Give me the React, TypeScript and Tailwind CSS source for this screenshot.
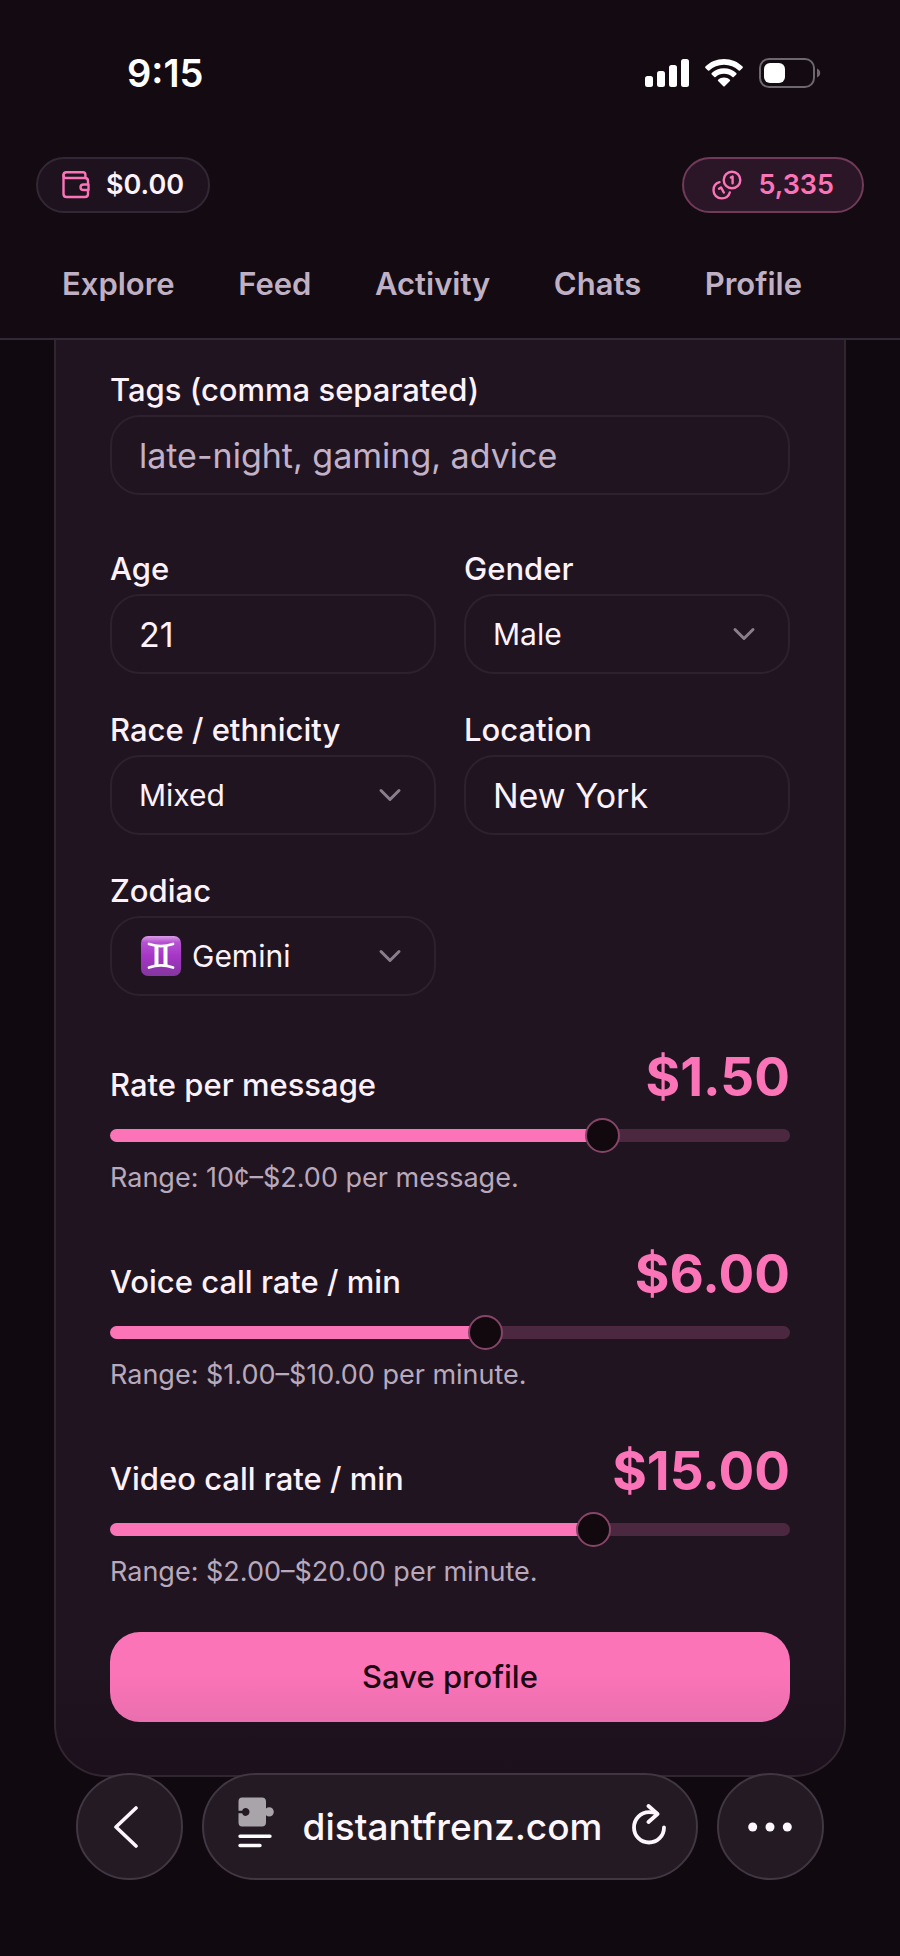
import { useState, type CSSProperties, type ReactNode } from "react";
import { ChevronDown } from "lucide-react";

const LINKS = ["Explore", "Feed", "Activity", "Chats", "Profile"];

const FIELD =
  "h-20 w-full rounded-[30px] border-2 border-[#2d212e] bg-[#211421] px-[27px] text-[#fdf2fb] outline-none";

function StatusBar() {
  return (
    <div className="flex h-[135px] items-center justify-between pt-[11px] pr-[79px] pl-[127px]">
      <span className="text-[38px] leading-10 font-semibold text-white">9:15</span>
      <div className="flex items-center gap-4">
        <svg width="44" height="28" viewBox="0 0 44 28" fill="#fff" aria-hidden="true">
          <rect x="0" y="17" width="8" height="11" rx="2.5" />
          <rect x="12" y="12" width="8" height="16" rx="2.5" />
          <rect x="24" y="6" width="8" height="22" rx="2.5" />
          <rect x="36" y="0" width="8" height="28" rx="2.5" />
        </svg>
        <svg width="38" height="28" viewBox="0 0 38 28" fill="#fff" aria-hidden="true">
          <path d="M19 0C26.400 0 33 2.800 37.600 7.600C38 8 38 8.500 37.600 8.900L35 11.500C34.600 11.900 34.100 11.900 33.700 11.500C29.800 7.800 24.700 5.700 19 5.700C13.300 5.700 8.200 7.800 4.300 11.500C3.900 11.900 3.400 11.900 3 11.500L0.400 8.900C0 8.500 0 8 0.400 7.600C5 2.800 11.600 0 19 0Z" />
          <path d="M19 9.300C23.800 9.300 28.100 11.100 31.300 14.100C31.700 14.500 31.700 15 31.300 15.400L28.700 18C28.300 18.400 27.800 18.400 27.400 18C25.100 16 22.200 14.800 19 14.800C15.800 14.800 12.900 16 10.600 18C10.200 18.400 9.700 18.400 9.300 18L6.700 15.400C6.300 15 6.300 14.500 6.700 14.100C9.900 11.100 14.200 9.300 19 9.300Z" />
          <path d="M19 18.600C21.200 18.600 23.300 19.400 24.900 20.800C25.300 21.200 25.300 21.700 24.900 22.100L19.700 27.300C19.300 27.700 18.700 27.700 18.300 27.300L13.100 22.100C12.700 21.700 12.700 21.200 13.100 20.800C14.700 19.400 16.800 18.600 19 18.600Z" />
        </svg>
        <svg width="62" height="30" viewBox="0 0 62 30" aria-hidden="true">
          <rect x="1" y="1" width="54" height="28" rx="9" fill="none" stroke="#6d686e" strokeWidth="2" />
          <rect x="5" y="5" width="21" height="20" rx="6" fill="#fff" />
          <path d="M58 10.500C60 11.300 61.200 13 61.200 15C61.200 17 60 18.700 58 19.500Z" fill="#6d686e" />
        </svg>
      </div>
    </div>
  );
}

function WalletIcon() {
  return (
    <svg width="28" height="28" viewBox="0 0 28 28" fill="none" stroke="#fb74b8" strokeWidth="2.400" strokeLinecap="round" strokeLinejoin="round" aria-hidden="true">
      <path d="M1.500 4V23C1.500 25 2.800 26 4.500 26H23C24.800 26 26 25 26 23V20" />
      <path d="M26 12.500V10C26 8 24.800 7 23 7H4C2.500 7 1.500 6 1.500 4.200C1.500 2.400 2.500 1.300 4.300 1.300H21C22.500 1.300 23.400 2.200 23.400 3.700V7" />
      <path d="M26.500 13.500H21.500C19.700 13.500 18.500 14.700 18.500 16.200C18.500 17.800 19.700 19 21.500 19H26.500Z" />
    </svg>
  );
}

function CoinsIcon() {
  return (
    <svg width="30" height="30" viewBox="0 0 30 30" fill="none" stroke="#fb74b8" strokeWidth="2.400" strokeLinecap="round" strokeLinejoin="round" aria-hidden="true">
      <circle cx="20" cy="10" r="8.300" />
      <path d="M18.800 7.500L20.600 6.500V13.200" />
      <path d="M7.500 12.200C4 13.200 1.500 16.400 1.500 20.200C1.500 24.800 5.200 28.400 9.800 28.400C13.600 28.400 16.800 26 17.800 22.500" />
      <path d="M7 18.700L9 17.400L11.800 22.500" />
    </svg>
  );
}

function GeminiIcon() {
  return (
    <svg width="40" height="40" viewBox="0 0 40 40" className="pointer-events-none absolute top-5 left-[31px]" aria-hidden="true">
      <defs>
        <linearGradient id="zodiac-tile" x1="0" y1="0" x2="0" y2="1">
          <stop offset="0" stopColor="#dc9ce8" />
          <stop offset="0.160" stopColor="#b552d2" />
          <stop offset="0.500" stopColor="#a636c6" />
          <stop offset="1" stopColor="#84369f" />
        </linearGradient>
      </defs>
      <rect width="40" height="40" rx="7" fill="url(#zodiac-tile)" />
      <path d="M8 8C15.500 10.600 24.500 10.600 32 8M8 31.500C15.500 28.900 24.500 28.900 32 31.500" fill="none" stroke="#fff" strokeWidth="2.800" strokeLinecap="round" />
      <path d="M15.500 10V29.500M24.500 10V29.500" fill="none" stroke="#fff" strokeWidth="4" />
    </svg>
  );
}

function PuzzleIcon() {
  return (
    <svg width="36" height="52" viewBox="0 0 36 52" aria-hidden="true">
      <path
        d="M4 0.500H24C26.500 0.500 28 2 28 4.500V11.500C29 10.700 30 10.300 31.200 10.300C33.800 10.300 35.800 12.300 35.800 14.900C35.800 17.500 33.800 19.500 31.200 19.500C30 19.500 29 19.100 28 18.300V25.500C28 28 26.500 29.500 24 29.500H4C1.800 29.500 0.500 28 0.500 25.500V16.300H4.200C4.800 18 6 18.900 7.500 18.900C9.800 18.900 11.500 17.200 11.500 15C11.500 12.800 9.800 11.100 7.500 11.100C6 11.100 4.800 12 4.200 13.700H0.500V4.500C0.500 2 1.800 0.500 4 0.500Z"
        fill="#a9a4aa"
      />
      <path d="M2 39.200H32M2 48.500H22" stroke="#fff" strokeWidth="3.400" strokeLinecap="round" />
    </svg>
  );
}

function Field({ id, label, children }: { id: string; label: string; children: ReactNode }) {
  return (
    <div>
      <label htmlFor={id} className="mb-[5px] block text-[31px] leading-10 font-medium text-[#fdf2fb]">
        {label}
      </label>
      {children}
    </div>
  );
}

function SelectField({ id, label, options, icon }: { id: string; label: string; options: string[]; icon?: ReactNode }) {
  const [value, setValue] = useState(options[0]);
  return (
    <Field id={id} label={label}>
      <div className="relative">
        {icon}
        <select
          id={id}
          value={value}
          onChange={(e) => setValue(e.target.value)}
          className={`${FIELD} appearance-none text-[30px] ${icon ? "pl-[80px]" : ""}`}
        >
          {options.map((o) => (
            <option key={o}>{o}</option>
          ))}
        </select>
        <ChevronDown size={36} className="pointer-events-none absolute top-[22px] right-7 text-[#8a7e8c]" />
      </div>
    </Field>
  );
}

interface RateProps {
  id: string;
  label: string;
  min: number;
  max: number;
  initial: number;
  hint: string;
}

function RateSlider({ id, label, min, max, initial, hint }: RateProps) {
  const [value, setValue] = useState(initial);
  const fill = { "--fill": `${((value - min) / (max - min)) * 100}%` } as CSSProperties;
  return (
    <div>
      <div className="flex items-baseline justify-between">
        <label htmlFor={id} className="text-[31px] leading-9 font-medium text-[#fdf2fb]">
          {label}
        </label>
        <output htmlFor={id} className="text-[53px] leading-[52px] font-bold text-[#fb74b8]">
          ${value.toFixed(2)}
        </output>
      </div>
      <input
        id={id}
        type="range"
        min={min}
        max={max}
        step={0.1}
        value={value}
        onChange={(e) => setValue(Number(e.target.value))}
        style={fill}
        className="mt-[15px] block h-[35px] w-full appearance-none bg-transparent outline-none [&::-webkit-slider-runnable-track]:h-[13px] [&::-webkit-slider-runnable-track]:rounded-full [&::-webkit-slider-runnable-track]:bg-[linear-gradient(to_right,#fb74b8_var(--fill),#4b283f_var(--fill))] [&::-webkit-slider-thumb]:-mt-[11px] [&::-webkit-slider-thumb]:size-[35px] [&::-webkit-slider-thumb]:appearance-none [&::-webkit-slider-thumb]:rounded-full [&::-webkit-slider-thumb]:border-2 [&::-webkit-slider-thumb]:border-[#864568] [&::-webkit-slider-thumb]:bg-[#12090f]"
      />
      <p className="mt-[9px] text-[27px] leading-8 text-[#b8a9bc]">{hint}</p>
    </div>
  );
}

export default function App() {
  const [tags, setTags] = useState("");
  const [age, setAge] = useState("21");
  const [location, setLocation] = useState("New York");

  return (
    <div className="min-h-screen bg-[#110910] font-['Inter','Liberation_Sans',sans-serif]">
      <header className="border-b-2 border-[#33283a] bg-[#130a12]">
        <StatusBar />
        <div className="flex items-center justify-between px-9 pt-[22px]">
          <button type="button" className="flex h-14 items-center gap-4 rounded-full border-2 border-[#322835] bg-[#1e121f] px-6 text-[27px] font-semibold text-[#fdf2fb]">
            <WalletIcon />
            $0.00
          </button>
          <button type="button" className="flex h-14 items-center gap-4 rounded-full border-2 border-[#703a58] bg-[#2b1628] px-7 text-[27px] font-semibold text-[#fb74b8]">
            <CoinsIcon />
            5,335
          </button>
        </div>
        <nav className="flex justify-between pt-[51px] pr-[98px] pb-[34px] pl-[62px]">
          {LINKS.map((link) => (
            <a key={link} href={`#${link.toLowerCase()}`} className="text-[31px] leading-10 font-semibold text-[#bfb1c3]">
              {link}
            </a>
          ))}
        </nav>
      </header>

      <main className="px-[54px]">
        <form
          onSubmit={(e) => e.preventDefault()}
          className="rounded-b-[52px] border-2 border-t-0 border-[#30262f] bg-[linear-gradient(to_bottom,#211421_92%,#1d101d)] px-[54px] pt-[30px] pb-[53px]"
        >
          <Field id="tags" label="Tags (comma separated)">
            <input
              id="tags"
              type="text"
              value={tags}
              onChange={(e) => setTags(e.target.value)}
              placeholder="late-night, gaming, advice"
              className={`${FIELD} text-[34px] placeholder:text-[#c2b1c7]`}
            />
          </Field>

          <div className="mt-[54px] grid grid-cols-2 gap-x-7 gap-y-9">
            <Field id="age" label="Age">
              <input
                id="age"
                type="text"
                inputMode="numeric"
                value={age}
                onChange={(e) => setAge(e.target.value)}
                className={`${FIELD} text-[34px]`}
              />
            </Field>
            <SelectField id="gender" label="Gender" options={["Male", "Female", "Other"]} />
            <SelectField id="race" label="Race / ethnicity" options={["Mixed", "Asian", "Black", "Latino", "White"]} />
            <Field id="location" label="Location">
              <input
                id="location"
                type="text"
                value={location}
                onChange={(e) => setLocation(e.target.value)}
                className={`${FIELD} text-[34px]`}
              />
            </Field>
            <SelectField id="zodiac" label="Zodiac" options={["Gemini"]} icon={<GeminiIcon />} />
          </div>

          <div className="mt-[55px] space-y-[54px]">
            <RateSlider id="message-rate" label="Rate per message" min={0.1} max={2} initial={1.5} hint="Range: 10¢–$2.00 per message." />
            <RateSlider id="voice-rate" label="Voice call rate / min" min={1} max={10} initial={6} hint="Range: $1.00–$10.00 per minute." />
            <RateSlider id="video-rate" label="Video call rate / min" min={2} max={20} initial={15} hint="Range: $2.00–$20.00 per minute." />
          </div>

          <button
            type="submit"
            className="mt-11 h-[90px] w-full rounded-[30px] bg-[linear-gradient(to_bottom,#fb74b8_45%,#ea6fae)] text-[31px] font-medium text-[#1a0813]"
          >
            Save profile
          </button>
        </form>
      </main>

      {/* Browser toolbar, overlaps the bottom edge of the card */}
      <div className="relative z-10 -mt-1 flex gap-[19px] px-[76px] pb-[76px]">
        <button type="button" aria-label="Back" className="flex size-[107px] shrink-0 items-center justify-center rounded-full border-2 border-[#413743] bg-[#231a24] pr-2">
          <svg width="26" height="42" viewBox="0 0 26 42" fill="none" stroke="#fdf6fc" strokeWidth="3.600" strokeLinecap="round" strokeLinejoin="round" aria-hidden="true">
            <path d="M23 2L3 21L23 40" />
          </svg>
        </button>
        <div className="flex h-[107px] min-w-0 flex-1 items-center justify-between rounded-full border-2 border-[#413743] bg-[#231a24] pr-[29px] pl-[34px]">
          <button type="button" aria-label="Page menu" className="pb-2">
            <PuzzleIcon />
          </button>
          <a href="#distantfrenz" className="text-[37px] leading-[44px] font-medium text-[#fdf6fc]">
            distantfrenz.com
          </a>
          <button type="button" aria-label="Reload" className="pb-1">
            <svg width="36" height="42" viewBox="0 0 36 42" fill="none" stroke="#fdf6fc" strokeWidth="3.800" strokeLinecap="round" strokeLinejoin="round" aria-hidden="true">
              <path d="M25.500 9.500C23.300 8.500 20.800 8.200 18 8.200C9.800 8.200 3 15 3 23.500C3 32 9.700 38.500 18 38.500C26.300 38.500 33 32 33 23.500" />
              <path d="M17.500 2L26.500 10L17.500 18" />
            </svg>
          </button>
        </div>
        <button type="button" aria-label="More" className="flex size-[107px] shrink-0 items-center justify-center rounded-full border-2 border-[#413743] bg-[#231a24] pr-[2px]">
          <svg width="44" height="10" viewBox="0 0 44 10" fill="#fdf6fc" aria-hidden="true">
            <circle cx="4.700" cy="5" r="4.500" />
            <circle cx="22" cy="5" r="4.500" />
            <circle cx="39.300" cy="5" r="4.500" />
          </svg>
        </button>
      </div>
    </div>
  );
}
